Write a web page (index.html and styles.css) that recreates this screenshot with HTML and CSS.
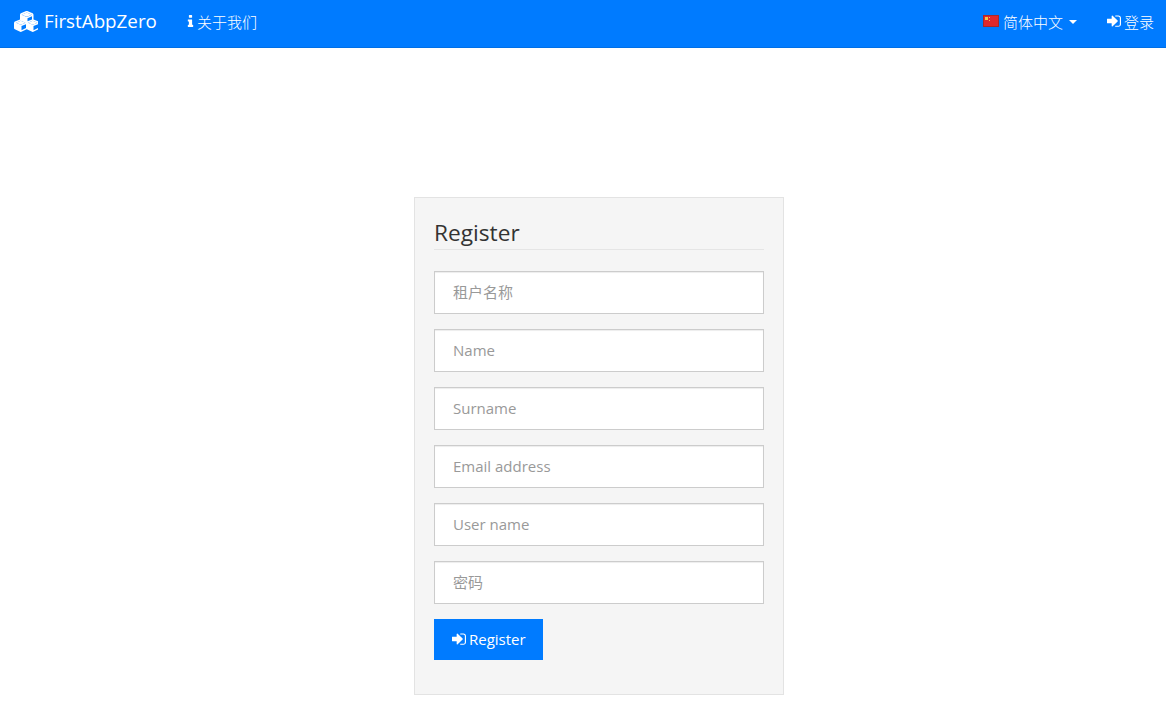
FILE: index.html
```html
<!DOCTYPE html>
<html>
<head>
  <title>Register</title>
  <meta charset="UTF-8">
  <link rel="stylesheet" href="styles.css">
</head>
<body>
  <nav class="navbar">
    <a class="brand" href="#">
      <svg class="ic_cubes" viewBox="0 0 2048 1792"><path d="M640 1632l384-192v-314l-384 164v342zm-64-454l404-173-404-173-404 173zm1088 454l384-192v-314l-384 164v342zm-64-454l404-173-404-173-404 173zm-448-293l384-165v-266l-384 164v267zm-64-379l441-189-441-189-441 189zm1088 518v416q0 36-19 67t-52 47l-448 224q-25 14-57 14t-57-14l-448-224q-4-2-7-4-2 2-7 4l-448 224q-25 14-57 14t-57-14l-448-224q-33-16-52-47t-19-67v-416q0-38 21.5-70t56.5-48l434-186v-400q0-38 21.5-70t56.5-48l448-192q23-10 50-10t50 10l448 192q35 16 56.5 48t21.5 70v400l434 186q36 16 57 48t21 70z"/><path d="M576 1178l404-173-404-173-404 173zM1600 1178l404-173-404-173-404 173zM1088 501l441-189-441-189-441 189z"/></svg>
      FirstAbpZero
    </a>
    <a class="nav_link about" href="#">
      <svg class="ic" viewBox="480 128 832 1408"><path d="M1216 1344v128q0 26-19 45t-45 19h-512q-26 0-45-19t-19-45v-128q0-26 19-45t45-19h64v-384h-64q-26 0-45-19t-19-45v-128q0-26 19-45t45-19h384q26 0 45 19t19 45v576h64q26 0 45 19t19 45zm-128-1152v192q0 26-19 45t-45 19h-256q-26 0-45-19t-19-45v-192q0-26 19-45t45-19h256q26 0 45 19t19 45z"/></svg>
      关于我们
    </a>
    <div class="nav_right">
      <a class="nav_link lang" href="#">
        <svg class="flag" viewBox="0 0 16 12">
          <rect width="16" height="12" fill="#a8282c"/>
          <rect x="1" y="1" width="14" height="10" fill="#e0282c"/>
          <rect x="2" y="2" width="3" height="3" fill="#f2c84b"/>
          <rect x="6" y="2" width="1" height="1" fill="#f2c84b"/>
          <rect x="6" y="5" width="1" height="1" fill="#f2c84b"/>
        </svg>
        简体中文
        <span class="caret"></span>
      </a>
      <a class="nav_link login" href="#">
        <svg class="ic_in" viewBox="0 128 1536 1536"><path d="M1184 896q0 26-19 45l-544 544q-19 19-45 19t-45-19-19-45v-288h-448q-26 0-45-19t-19-45v-384q0-26 19-45t45-19h448v-288q0-26 19-45t45-19 45 19l544 544q19 19 19 45zM1536 544v704q0 119-84.5 203.5t-203.5 84.5h-320q-32 0-32-32 0-60 32-80h320q66 0 113-47t47-113v-704q0-66-47-113t-113-47h-320q-32 0-32-32 0-60 32-80h320q119 0 203.5 84.5t84.5 203.5z"/></svg>
        登录
      </a>
    </div>
  </nav>

  <div class="well">
    <h3 class="title">Register</h3>
    <form>
      <input class="field" type="text" placeholder="租户名称">
      <input class="field" type="text" placeholder="Name">
      <input class="field" type="text" placeholder="Surname">
      <input class="field" type="text" placeholder="Email address">
      <input class="field" type="text" placeholder="User name">
      <input class="field" type="text" placeholder="密码">
      <button class="bt_register" type="button">
        <svg class="ic_in" viewBox="0 128 1536 1536"><path d="M1184 896q0 26-19 45l-544 544q-19 19-45 19t-45-19-19-45v-288h-448q-26 0-45-19t-19-45v-384q0-26 19-45t45-19h448v-288q0-26 19-45t45-19 45 19l544 544q19 19 19 45zM1536 544v704q0 119-84.5 203.5t-203.5 84.5h-320q-32 0-32-32 0-60 32-80h320q66 0 113-47t47-113v-704q0-66-47-113t-113-47h-320q-32 0-32-32 0-60 32-80h320q119 0 203.5 84.5t84.5 203.5z"/></svg>
        Register
      </button>
    </form>
  </div>
</body>
</html>
```

FILE: styles.css
```css
body {
    margin: 0;
    font-family: "Open Sans", "Noto Sans CJK SC", sans-serif;
    font-size: 15px;
    color: #333;
    background: #fff;
}
a {text-decoration: none; color: #fff;}

.navbar {
    display: flex;
    align-items: center;
    box-sizing: border-box;
    height: 48px;
    padding: 0 12px 5px 14px;
    background: #007bff;
    border-bottom: 1px solid #006fe6;
}
.brand {
    display: flex;
    align-items: center;
    gap: 6px;
    font-size: 18.8px;
}
.nav_link {
    display: flex;
    align-items: center;
    gap: 3px;
    font-size: 15px;
    font-weight: 300;
}
.about {margin-left: 30px;}
.nav_right {
    display: flex;
    align-items: center;
    gap: 30px;
    margin-left: auto;
}
.ic_cubes {width: 24px; height: 21px; fill: #fff;}
.ic {width: 7px; height: 12px; fill: #fff;}
.ic_in {width: 14px; height: 14px; fill: #fff;}
.flag {width: 16px; height: 12px; margin-right: 1px;}
.caret {
    width: 0;
    height: 0;
    margin: 2px 0 0 3px;
    border-top: 4px solid #fff;
    border-left: 4px solid transparent;
    border-right: 4px solid transparent;
}

.well {
    width: 330px;
    margin: 149px 0 22px 414px;
    padding: 19px 19px 34px;
    background: #f5f5f5;
    border: 1px solid #e3e3e3;
}
.title {
    margin: 0 0 21px;
    height: 32px;
    line-height: 32px;
    font-size: 22.7px;
    font-weight: 400;
    color: #333;
    border-bottom: 1px solid #e5e5e5;
}
.field {
    display: block;
    box-sizing: border-box;
    width: 100%;
    height: 43px;
    margin-bottom: 15px;
    padding: 0 18px 2px;
    font-family: inherit;
    font-size: 15px;
    background: #fff;
    border: 1px solid #ccc;
    box-shadow: inset 0 1px 1px rgba(0,0,0,.075);
}
.field::placeholder {color: #999;}
.bt_register {
    display: flex;
    align-items: center;
    gap: 3px;
    height: 41px;
    padding: 0 17px 2px 18px;
    font-family: inherit;
    font-size: 15px;
    color: #fff;
    background: #007bff;
    border: 0;
}
```
